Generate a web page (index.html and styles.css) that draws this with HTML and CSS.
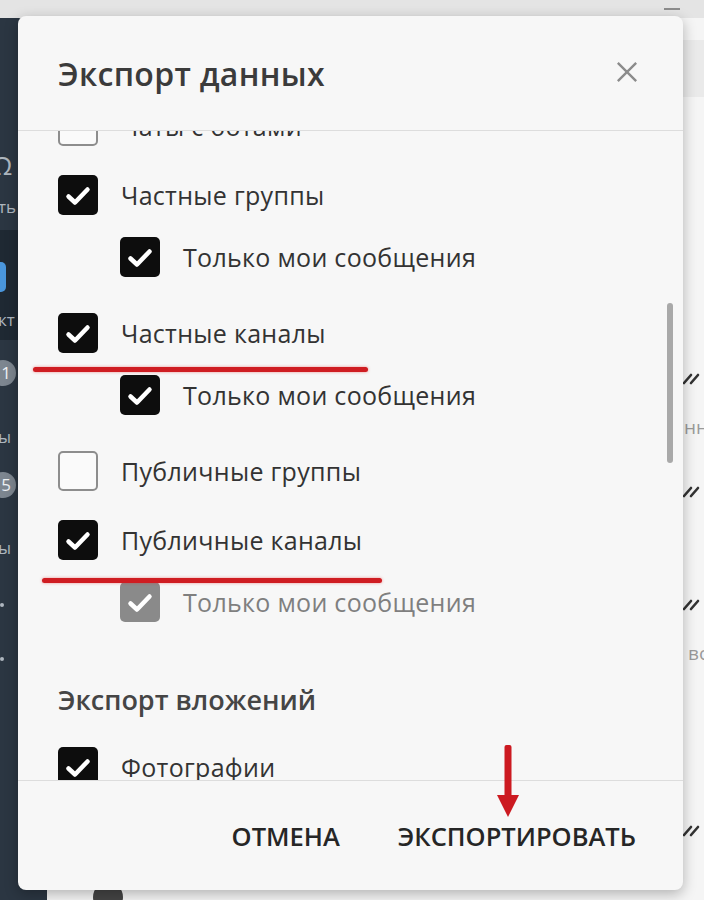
FILE: index.html
```html
<!DOCTYPE html>
<html lang="ru">
<head>
    <meta charset="UTF-8">
    <meta name="viewport" content="width=device-width, initial-scale=1.0">
    <title>Экспорт данных</title>
    <link rel="stylesheet" href="styles.css">
</head>
<body>
    <div class="app">
        <div class="topbar"><span class="topbar-dash"></span></div>
        <div class="content">
            <!-- left navigation -->
            <nav class="sidebar">
                <div class="nav-item first"><span class="nav-icon">Ω</span><span class="nav-label">ть</span></div>
                <div class="nav-item active"><span class="nav-pill"></span><span class="nav-label">кт</span></div>
                <div class="nav-item"><span class="nav-badge">1</span><span class="nav-label">ы</span></div>
                <div class="nav-item"><span class="nav-badge">5</span><span class="nav-label">ы</span></div>
                <div class="nav-item dots"><span class="nav-dot"></span><span class="nav-dot"></span></div>
            </nav>

            <!-- chat list behind the dialog -->
            <main class="main">
                <div class="main-head"></div>
                <div class="chat-list">
                    <div class="chat"><span class="avatar"></span><div class="chat-text"><div class="chat-meta"><svg class="ticks" viewBox="0 0 20 14"><path d="M2 12 L9 4 M9 12 L16 4"/></svg></div><div class="chat-preview">нн</div></div></div>
                    <div class="chat"><span class="avatar"></span><div class="chat-text"><div class="chat-meta"><svg class="ticks" viewBox="0 0 20 14"><path d="M2 12 L9 4 M9 12 L16 4"/></svg></div><div class="chat-preview"></div></div></div>
                    <div class="chat"><span class="avatar"></span><div class="chat-text"><div class="chat-meta"><svg class="ticks" viewBox="0 0 20 14"><path d="M2 12 L9 4 M9 12 L16 4"/></svg></div><div class="chat-preview">вс</div></div></div>
                    <div class="chat"><span class="avatar"></span><div class="chat-text"><div class="chat-meta"></div><div class="chat-preview"></div></div></div>
                    <div class="chat"><span class="avatar"></span><div class="chat-text"><div class="chat-meta"><svg class="ticks" viewBox="0 0 20 14"><path d="M2 12 L9 4 M9 12 L16 4"/></svg></div><div class="chat-preview"></div></div></div>
                </div>
            </main>
        </div>
    </div>

    <!-- Export dialog -->
    <div class="modal">
        <div class="modal-head">
            <h2 class="modal-title">Экспорт данных</h2>
            <button class="close-btn">
                <svg viewBox="0 0 24 24"><path d="M2 2 L22 22 M22 2 L2 22"/></svg>
            </button>
        </div>

        <div class="modal-body">
            <div class="options">
                <div class="group">
                    <label class="row"><span class="box"></span>Чаты с ботами</label>
                </div>
                <div class="group">
                    <label class="row"><span class="box checked"><svg viewBox="0 0 40 40"><path d="M10.5 21.5 L17 27.5 L29.5 14.5"/></svg></span>Частные группы</label>
                    <label class="row sub"><span class="box checked"><svg viewBox="0 0 40 40"><path d="M10.5 21.5 L17 27.5 L29.5 14.5"/></svg></span>Только мои сообщения</label>
                </div>
                <div class="group">
                    <label class="row"><span class="box checked"><svg viewBox="0 0 40 40"><path d="M10.5 21.5 L17 27.5 L29.5 14.5"/></svg></span>Частные каналы</label>
                    <label class="row sub"><span class="box checked"><svg viewBox="0 0 40 40"><path d="M10.5 21.5 L17 27.5 L29.5 14.5"/></svg></span>Только мои сообщения</label>
                </div>
                <div class="group">
                    <label class="row"><span class="box"></span>Публичные группы</label>
                </div>
                <div class="group">
                    <label class="row"><span class="box checked"><svg viewBox="0 0 40 40"><path d="M10.5 21.5 L17 27.5 L29.5 14.5"/></svg></span>Публичные каналы</label>
                    <label class="row sub disabled"><span class="box checked"><svg viewBox="0 0 40 40"><path d="M10.5 21.5 L17 27.5 L29.5 14.5"/></svg></span>Только мои сообщения</label>
                </div>

                <h3 class="section-title">Экспорт вложений</h3>
                <div class="group">
                    <label class="row"><span class="box checked"><svg viewBox="0 0 40 40"><path d="M10.5 21.5 L17 27.5 L29.5 14.5"/></svg></span>Фотографии</label>
                </div>
            </div>
            <div class="scroll-thumb"></div>
        </div>

        <div class="modal-foot">
            <button class="text-btn">Отмена</button>
            <button class="text-btn">Экспортировать</button>
        </div>
    </div>

    <!-- red annotations drawn over the screenshot -->
    <div class="mark mark-1"></div>
    <div class="mark mark-2"></div>
    <svg class="arrow" viewBox="0 0 22 72"><rect x="7.5" y="0" width="7" height="54" rx="2"/><path d="M0 50 L22 50 L11 72 Z"/></svg>
</body>
</html>
```

FILE: styles.css
```css
body {
    margin: 0;
    padding: 0;
    font-family: "Open Sans", "Noto Sans", sans-serif;
    overflow: hidden;
    background: #f3f3f3;
}

.app {
    width: 704px;
    height: 900px;
    display: flex;
    flex-direction: column;
    overflow: hidden;
}

.topbar {
    height: 18px;
    background: #e4e4e4;
    display: flex;
    justify-content: flex-end;
    align-items: center;
    padding-right: 24px;
    flex-shrink: 0;
}

.topbar-dash {
    width: 16px;
    height: 2px;
    background: #8c8c8c;
}

.content {
    flex: 1;
    display: flex;
    min-height: 0;
}

/* sidebar */
.sidebar {
    width: 47px;
    background: #2b3642;
    display: flex;
    flex-direction: column;
    padding-top: 112px;
    flex-shrink: 0;
}

.nav-item {
    height: 120px;
    display: flex;
    flex-direction: column;
    align-items: flex-start;
    color: #aeb6bf;
    font-size: 17px;
    box-sizing: border-box;
}

.nav-item.first {
    height: 100px;
    padding-top: 21px;
    gap: 18px;
}

.nav-item.active {
    background: #1f2933;
    height: 110px;
    padding-top: 32px;
    gap: 18px;
}

.nav-item:nth-child(3) {
    padding-top: 20px;
    gap: 41px;
}

.nav-item:nth-child(4) {
    padding-top: 12px;
    gap: 40px;
}

.nav-item.dots {
    padding-top: 23px;
    gap: 50px;
}

.nav-icon {
    font-size: 26px;
    line-height: 28px;
    margin-left: -8px;
}

.nav-label {
    margin-left: -2px;
    line-height: 20px;
}

.nav-pill {
    width: 14px;
    height: 30px;
    margin-left: -8px;
    border-radius: 5px;
    background: #4a96dc;
}

.nav-badge {
    width: 26px;
    height: 26px;
    margin-left: -10px;
    border-radius: 50%;
    background: #7d8690;
    color: #eef1f4;
    font-size: 17px;
    line-height: 26px;
    text-align: center;
    padding-left: 6px;
    box-sizing: border-box;
}

.nav-dot {
    width: 4px;
    height: 4px;
    border-radius: 2px;
    background: #aeb6bf;
}

/* main area */
.main {
    flex: 1;
    background: #f5f5f5;
    display: flex;
    flex-direction: column;
    overflow: hidden;
}

.main-head {
    height: 57px;
    margin-top: 22px;
    background: #eaeaea;
    flex-shrink: 0;
}

.chat-list {
    padding-top: 271px;
}

.chat {
    height: 113px;
    display: flex;
    align-items: flex-start;
    padding-left: 46px;
}

.avatar {
    width: 30px;
    height: 30px;
    border-radius: 50%;
    background: #444;
    margin-top: 62px;
}

.chat-text {
    flex: 1;
    display: flex;
    flex-direction: column;
    align-items: flex-end;
    padding-right: 2px;
}

.chat-meta {
    height: 20px;
    display: flex;
    align-items: center;
}

.ticks {
    width: 20px;
    height: 14px;
}

.ticks path {
    fill: none;
    stroke: #333;
    stroke-width: 2.6;
    stroke-linecap: round;
}

.chat-preview {
    margin-top: 27px;
    color: #9a9a9a;
    font-size: 19px;
    line-height: 24px;
    height: 24px;
    margin-right: -6px;
}

/* dialog */
.modal {
    position: absolute;
    left: 18px;
    top: 16px;
    width: 665px;
    height: 874px;
    background: #f7f7f7;
    border-radius: 8px;
    box-shadow: 0 4px 14px rgba(0, 0, 0, 0.28);
    display: flex;
    flex-direction: column;
    overflow: hidden;
}

.modal-head {
    height: 114px;
    flex-shrink: 0;
    border-bottom: 1px solid #dddddd;
    display: flex;
    align-items: center;
    justify-content: space-between;
    padding: 0 45px 0 40px;
}

.modal-title {
    margin: 0;
    font-size: 32px;
    font-weight: 600;
    letter-spacing: 0.3px;
    color: #3b3b3b;
}

.close-btn {
    width: 22px;
    height: 22px;
    padding: 0;
    border: none;
    background: none;
    margin-top: -2px;
}

.close-btn svg {
    width: 22px;
    height: 22px;
    display: block;
}

.close-btn path {
    stroke: #8c8c8c;
    stroke-width: 2.6;
    fill: none;
}

.modal-body {
    flex: 1;
    position: relative;
    overflow: hidden;
}

.options {
    margin-top: -36px;
    padding-left: 40px;
}

.group {
    margin-bottom: 7px;
}

.row {
    height: 62px;
    display: flex;
    align-items: center;
    gap: 23px;
    font-size: 25px;
    letter-spacing: 0.3px;
    color: #333;
}

.row.sub {
    height: 69px;
    padding-left: 62px;
    padding-bottom: 7px;
    box-sizing: border-box;
}

.row.disabled {
    color: #7f7f7f;
}

.box {
    width: 40px;
    height: 40px;
    border-radius: 5px;
    border: 2px solid #8d8d8d;
    background: #fafafa;
    box-sizing: border-box;
    flex-shrink: 0;
}

.box.checked {
    border: none;
    background: #0d0d0d;
}

.row.disabled .box.checked {
    background: #8a8a8a;
}

.box svg {
    width: 40px;
    height: 40px;
    display: block;
}

.box path {
    fill: none;
    stroke: #fff;
    stroke-width: 4.5;
    stroke-linecap: round;
    stroke-linejoin: round;
}

.section-title {
    margin: 37px 0 13px;
    font-size: 27px;
    line-height: 46px;
    font-weight: 600;
    color: #454545;
}

.scroll-thumb {
    position: absolute;
    right: 10px;
    top: 172px;
    width: 6px;
    height: 160px;
    border-radius: 3px;
    background: #a9a9a9;
}

.modal-foot {
    height: 109px;
    flex-shrink: 0;
    border-top: 1px solid #dddddd;
    display: flex;
    justify-content: flex-end;
    align-items: center;
    gap: 58px;
    padding-right: 47px;
}

.text-btn {
    border: none;
    background: none;
    padding: 0;
    font-family: "Open Sans", "Noto Sans", sans-serif;
    font-size: 25.5px;
    font-weight: 600;
    text-transform: uppercase;
    color: #262626;
    margin-top: 1px;
}

/* annotations */
.mark {
    position: absolute;
    height: 5px;
    border-radius: 3px;
    background: #cf1d22;
    box-shadow: 0 0 3px rgba(230, 40, 40, 0.5);
}

.mark-1 {
    left: 33px;
    top: 367px;
    width: 335px;
}

.mark-2 {
    left: 42px;
    top: 578px;
    width: 340px;
}

.arrow {
    position: absolute;
    left: 497px;
    top: 745px;
    width: 22px;
    height: 72px;
    fill: #cc1a21;
}
```
